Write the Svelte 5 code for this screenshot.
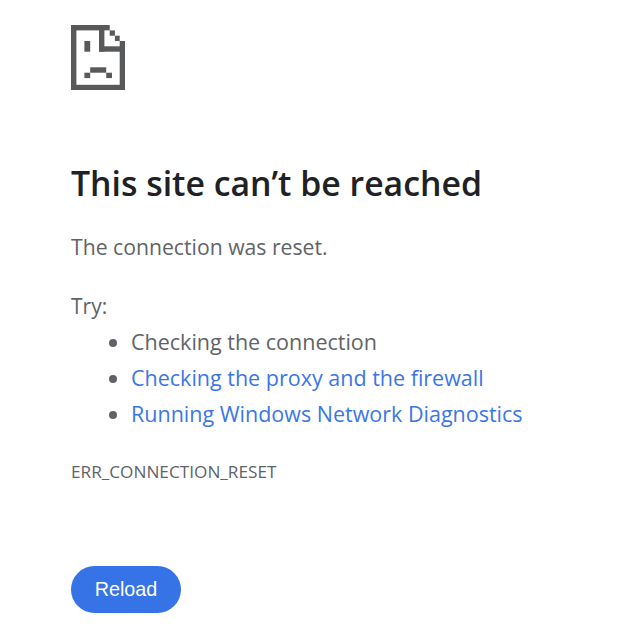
<script>
    const steps = [
        { label: "Checking the connection", link: false },
        { label: "Checking the proxy and the firewall", link: true },
        { label: "Running Windows Network Diagnostics", link: true }
    ];
</script>

<main class="page">
    <svg class="icon" width="54" height="65" viewBox="0 0 54 65" fill="#58595b" aria-hidden="true">
        <!-- page outline -->
        <rect x="0" y="0" width="38.700" height="5.400" />
        <rect x="0" y="0" width="5.400" height="65" />
        <rect x="0" y="59.800" width="54" height="5.200" />
        <rect x="48.700" y="16" width="5.300" height="49" />
        <!-- folded corner -->
        <rect x="28" y="0" width="5.400" height="26.700" />
        <rect x="28" y="21.300" width="21" height="5.400" />
        <rect x="38.700" y="5.400" width="5.200" height="5.300" />
        <rect x="43.900" y="10.700" width="4.800" height="5.300" />
        <!-- face -->
        <rect x="13.400" y="16" width="5.800" height="10.700" />
        <rect x="19.200" y="42.300" width="16" height="5.400" />
        <rect x="13.400" y="47.700" width="5.800" height="5.400" />
        <rect x="35.200" y="47.700" width="5.800" height="5.400" />
    </svg>

    <h1>This site can’t be reached</h1>
    <p class="reason">The connection was reset.</p>
    <p class="try">Try:</p>
    <ul>
        {#each steps as step}
            <li>
                {#if step.link}
                    <a href="#top">{step.label}</a>
                {:else}
                    {step.label}
                {/if}
            </li>
        {/each}
    </ul>
    <div class="code">ERR_CONNECTION_RESET</div>
    <button>Reload</button>
</main>

<style>
    :global(body) {
        background: #fff;
    }
    .page {
        display: flex;
        flex-direction: column;
        align-items: flex-start;
        padding: 25px 0 0 71px;
        font-family: "Open Sans", sans-serif;
        color: #5f6368;
    }
    .icon {
        display: block;
    }
    h1 {
        margin: 70px 0 0;
        font-size: 33.8px;
        line-height: 46px;
        font-weight: 600;
        color: #202124;
    }
    .reason {
        margin: 26px 0 0;
        font-size: 21.2px;
        line-height: 30px;
    }
    .try {
        margin: 29px 0 0;
        font-size: 21px;
        line-height: 30px;
    }
    ul {
        margin: 3px 0 0;
        padding: 0 0 0 60px;
        font-size: 21.5px;
    }
    li {
        line-height: 36px;
    }
    li::marker {
        color: #5f6368;
    }
    a {
        color: #3b76e8;
        text-decoration: none;
    }
    .code {
        margin: 29px 0 0;
        font-size: 17.2px;
        line-height: 22px;
    }
    button {
        margin-top: 83px;
        width: 110px;
        height: 47px;
        border: none;
        border-radius: 24px;
        background: #3573e6;
        color: #fff;
        font-family: "Liberation Sans", sans-serif;
        font-size: 19.8px;
    }
</style>
